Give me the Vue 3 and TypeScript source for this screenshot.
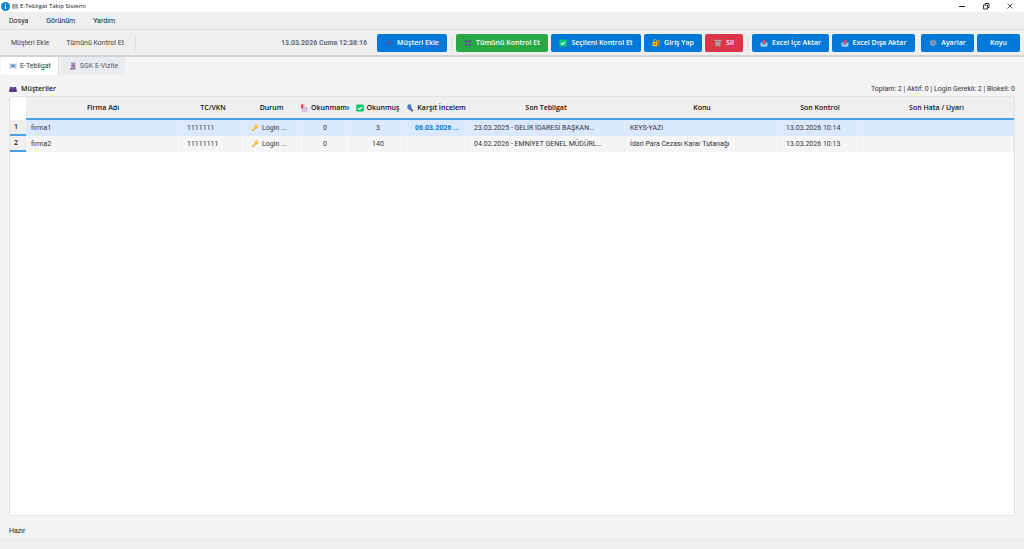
<script setup lang="ts">
import { ref } from 'vue'

interface Customer {
  name: string
  taxId: string
  status: string
  unread: number
  read: number
  review: string
  notice: string
  subject: string
  checked: string
  error: string
}

const customers: Customer[] = [
  { name: 'firma1', taxId: '1111111', status: 'Login ...', unread: 0, read: 3, review: '06.03.2026 ...', notice: '23.03.2025 - GELİR İDARESİ BAŞKAN...', subject: 'KEYS-YAZI', checked: '13.03.2026 10:14', error: '' },
  { name: 'firma2', taxId: '11111111', status: 'Login ...', unread: 0, read: 140, review: '', notice: '04.02.2026 - EMNİYET GENEL MÜDÜRL...', subject: 'İdari Para Cezası Karar Tutanağı', checked: '13.03.2026 10:13', error: '' },
]
const selected = ref(0)
const tab = ref(0)
</script>

<template>
  <div class="window">
    <header class="titlebar">
      <svg class="app-icon" viewBox="0 0 9 9"><circle cx="4.5" cy="4.5" r="4.5" fill="#0a84d8" /><path d="M4.5 1.6v1.2M4.5 3.7v3.6" stroke="#fff" stroke-width="1.1" /></svg>
      <svg class="mail-icon" viewBox="0 0 6 6"><path d="M.4 1.5h5.2v3.7H.4z" fill="#ddd" stroke="#777" stroke-width=".6" /><path d="M.5 1.6 3 3.7l2.5-2.1M.5 5l1.8-1.8M5.5 5 3.7 3.2" fill="none" stroke="#555" stroke-width=".6" /></svg>
      <span class="title">E-Tebligat Takip Sistemi</span>
      <div class="controls">
        <button aria-label="Simge durumuna küçült"><svg viewBox="0 0 8 8"><path d="M1 4.5h6" stroke="#222" /></svg></button>
        <button aria-label="Önceki boyut"><svg viewBox="0 0 8 8"><path d="M1.5 3h4v4h-4zM3 2.5v-1h4v4h-1" fill="none" stroke="#222" stroke-width=".9" /></svg></button>
        <button aria-label="Kapat"><svg viewBox="0 0 8 8"><path d="m1.5 1.5 5 5m0-5-5 5" stroke="#222" stroke-width=".8" /></svg></button>
      </div>
    </header>

    <nav class="menubar">
      <button>Dosya</button>
      <button>Görünüm</button>
      <button>Yardım</button>
    </nav>

    <div class="toolbar">
      <button class="plain">Müşteri Ekle</button>
      <button class="plain">Tümünü Kontrol Et</button>
      <span class="sep"></span>
      <time class="clock">13.03.2026 Cuma 12:38:16</time>
      <button class="act w-add"><svg viewBox="0 0 8 8"><path d="M4 .8v6.4M.8 4h6.4" stroke="#5f5a9c" stroke-width="1.4" /></svg>Müşteri Ekle</button>
      <span class="sep"></span>
      <button class="act green w-all"><svg viewBox="0 0 8 8"><path d="M.3 2.5 2.5.6v1h5v1.6h-5v1.2zM1 5.3h6.5v1.7H1z" fill="#5c5890" /></svg>Tümünü Kontrol Et</button>
      <button class="act w-sel"><svg viewBox="0 0 8 8"><rect x=".3" y=".5" width="7.4" height="7" rx="1" fill="#00cc70" /><path d="m2 4 1.5 1.5L6.2 2.8" fill="none" stroke="#fff" stroke-width="1.1" /></svg>Seçileni Kontrol Et</button>
      <button class="act w-login"><svg viewBox="0 0 8 8"><path d="M1.8 3V1.8a1.3 1.3 0 0 1 2.8 0V3" fill="none" stroke="#d8b46a" stroke-width=".8" /><rect x=".5" y="2.7" width="5" height="4.5" rx=".5" fill="#f6b82c" /><path d="M6.5 1v6M5.7 1.5h1.8v2H5.7" fill="none" stroke="#b98a3c" stroke-width=".9" /><path d="M3 4v1.7" stroke="#563b28" /></svg>Giriş Yap</button>
      <button class="act red w-del"><svg viewBox="0 0 8 8"><path d="M.5.8h7v1.3h-7z" fill="#b5aaa8" /><path d="M1 2.3h6l-.4 5H1.4z" fill="#a08f8c" /><path d="m2 3 4 3.7M6 3 2 6.7" stroke="#cdbfbc" stroke-width=".7" /></svg>Sil</button>
      <span class="sep"></span>
      <button class="act w-in"><svg viewBox="0 0 8 8"><path d="M1 3.8h6v3.4H1z" fill="#6fbfe6" /><path d="M1 3.5v3.7h6V3.5" fill="none" stroke="#d4dce2" stroke-width=".8" /><path d="M4 .3 6.2 3H5.2v2H2.8V3h-1z" fill="#f0446a" /></svg>Excel İçe Aktar</button>
      <button class="act w-out"><svg viewBox="0 0 8 8"><path d="M1 3.8h6v3.4H1z" fill="#6fbfe6" /><path d="M1 3.5v3.7h6V3.5" fill="none" stroke="#d4dce2" stroke-width=".8" /><path d="M4 .3 6.2 3H5.2v2H2.8V3h-1z" fill="#f0446a" /></svg>Excel Dışa Aktar</button>
      <button class="act w-set"><svg viewBox="0 0 8 8"><circle cx="4" cy="4" r="3" fill="none" stroke="#a09aac" stroke-width="1.3" stroke-dasharray="1.35 1" /><circle cx="4" cy="4" r="2" fill="none" stroke="#a59fb0" stroke-width="1.2" /><circle cx="4" cy="4" r=".8" fill="#c2bccb" /></svg>Ayarlar</button>
      <button class="act w-dark">Koyu</button>
    </div>

    <div class="tabs" role="tablist">
      <button role="tab" class="tab" :class="{ on: tab === 0 }" :aria-selected="tab === 0" @click="tab = 0"><svg viewBox="0 0 8 8"><path d="M.4 1.6h7.2v5H.4z" fill="#d6dde6" /><path d="M.6 2 4 4.7 7.4 2M.6 6.3l2.4-2M7.4 6.3l-2.4-2" fill="none" stroke="#8095b0" stroke-width=".6" /><path d="M2.4 2.5h3.2v2.4H2.4z" fill="#3b9be0" /></svg>E-Tebligat</button>
      <button role="tab" class="tab" :class="{ on: tab === 1 }" :aria-selected="tab === 1" @click="tab = 1"><svg viewBox="0 0 8 8"><path d="M2 .5h4.5v6H2z" fill="#b9a5c6" /><path d="M2.8 2h3M2.8 3.4h3M2.8 4.8h3" stroke="#775a8c" stroke-width=".7" /><path d="M1 6.2h5.5v1.3H1z" fill="#8a6f9d" /></svg>SGK E-Vizite</button>
    </div>

    <main class="content">
      <div class="caption">
        <h1><svg viewBox="0 0 8 8"><path d="M.2 7V4.5Q.2 3.8.8 3.8V2.2q.9-1 1.8 0h2.8q.9-1 1.8 0v1.6q.6 0 .6.7V7z" fill="#5b3b83" /><circle cx="4" cy="3.6" r="1" fill="#7c5aa3" /></svg>Müşteriler</h1>
        <p>Toplam: 2 | Aktif: 0 | Login Gerekli: 2 | Blokeli: 0</p>
      </div>

      <div class="table-box">
        <table>
          <colgroup>
            <col class="c-no"><col class="c-wide"><col class="c-mid"><col class="c-small"><col class="c-small"><col class="c-small"><col class="c-mid"><col class="c-wide"><col class="c-wide"><col class="c-date"><col>
          </colgroup>
          <thead>
            <tr>
              <td class="corner"></td>
              <th>Firma Adı</th>
              <th>TC/VKN</th>
              <th>Durum</th>
              <th><svg viewBox="0 0 8 8"><path d="M2 3.5h5V7.5H2z" fill="#ddd3df" stroke="#b9a5bd" stroke-width=".5" /><path d="m2 3.7 2.5 2L7 3.7" fill="none" stroke="#a28ca8" stroke-width=".6" /><path d="M1 .5h2v3.8H1z" fill="#e8345e" /><path d="M3 .6h1.4v1.6H3z" fill="#f36b86" /></svg>Okunmamı</th>
              <th><svg viewBox="0 0 8 8"><rect x=".2" y=".4" width="7.6" height="7.2" rx="1" fill="#00c969" /><path d="m2 4 1.5 1.5L6.2 2.8" fill="none" stroke="#fff" stroke-width="1.1" /></svg>Okunmuş</th>
              <th><svg viewBox="0 0 8 8"><path d="m4.5 4.5 2 2.8" stroke="#5a3c7c" stroke-width="1.7" /><ellipse cx="3.4" cy="3" rx="1.7" ry="2.4" fill="#2e8ee0" stroke="#4a5d8c" stroke-width=".7" /></svg>Karşıt İncelem</th>
              <th>Son Tebligat</th>
              <th>Konu</th>
              <th>Son Kontrol</th>
              <th>Son Hata / Uyarı</th>
            </tr>
          </thead>
          <tbody>
            <tr v-for="(c, i) in customers" :key="c.taxId" :class="{ picked: selected === i }" @click="selected = i">
              <th scope="row">{{ i + 1 }}</th>
              <td>{{ c.name }}</td>
              <td>{{ c.taxId }}</td>
              <td><svg viewBox="0 0 8 8"><path d="M5 3.2 1 7.1" stroke="#f4b22d" stroke-width="1.4" /><path d="m1.6 5.3 1.3 1.3" stroke="#f4b22d" stroke-width=".8" /><circle cx="5.4" cy="2.5" r="2" fill="#fdbb35" /><circle cx="6.1" cy="1.9" r=".5" fill="#fff" /></svg>{{ c.status }}</td>
              <td class="num">{{ c.unread }}</td>
              <td class="num">{{ c.read }}</td>
              <td class="review">{{ c.review }}</td>
              <td>{{ c.notice }}</td>
              <td>{{ c.subject }}</td>
              <td>{{ c.checked }}</td>
              <td>{{ c.error }}</td>
            </tr>
          </tbody>
        </table>
      </div>
      <p class="state">Hazır</p>
    </main>
    <footer class="statusbar"></footer>
  </div>
</template>

<style>
body {
  margin: 0;
}
</style>

<style scoped>
.window {
  display: flex;
  flex-direction: column;
  min-height: 100vh;
  background: #f4f4f4;
  color: #222;
  font: 7px/10px Roboto, "Noto Sans", sans-serif;
}
button {
  margin: 0;
  padding: 0;
  border: 0;
  background: none;
  color: inherit;
  font: inherit;
  white-space: nowrap;
}
svg {
  width: 8px;
  height: 8px;
  flex: none;
}
h1, p {
  margin: 0;
  font-size: 7px;
}
.titlebar {
  display: flex;
  align-items: center;
  height: 12px;
  padding-left: 1px;
  background: #fff;
}
.app-icon {
  width: 9px;
  height: 9px;
}
.mail-icon {
  width: 6px;
  height: 6px;
  margin: 0 2px;
}
.title {
  color: #111;
  font-family: "Open Sans", "Noto Sans", sans-serif;
  font-size: 6px;
}
.controls {
  display: flex;
  gap: 16px;
  margin-left: auto;
  padding-right: 10px;
}
.controls button {
  display: flex;
}
.menubar {
  display: flex;
  gap: 18px;
  height: 17px;
  padding-left: 9px;
  background: #efefef;
  border-bottom: 1px solid #dedede;
}
.toolbar {
  display: flex;
  align-items: center;
  height: 25px;
  padding: 0 4px 0 11px;
  background: #efefef;
  border-bottom: 2px solid #d2d2d2;
}
.plain {
  margin-right: 17px;
  color: #444;
}
.sep {
  width: 1px;
  height: 15px;
  margin: 0 4px;
  background: #dcdcdc;
}
.plain + .sep {
  margin-left: -6px;
}
.clock {
  margin-left: auto;
  margin-right: 10px;
  color: #5f6b7c;
  font-weight: 700;
}
.act {
  display: flex;
  align-items: center;
  justify-content: center;
  gap: 4px;
  height: 18px;
  border-radius: 2px;
  background: #0078d7;
  color: #fff;
}
.act, th, h1 {
  font-family: "Open Sans", "Noto Sans", sans-serif;
  font-weight: 600;
}
.act + .act {
  margin-left: 3px;
}
.green {
  background: #28a745;
}
.red {
  background: #dc3545;
}
.w-add { width: 70px; }
.w-all { width: 92px; }
.w-sel { width: 90px; }
.w-login { width: 58px; }
.w-del { width: 38px; }
.w-in { width: 77px; }
.w-out { width: 83px; }
.w-set { width: 53px; }
.w-dark { width: 43px; }
.act + .w-set {
  margin-left: 6px;
}
.tabs {
  display: flex;
  gap: 2px;
  padding-left: 1px;
}
.tab {
  display: flex;
  align-items: center;
  gap: 3px;
  height: 18px;
  padding: 0 7px 0 8px;
  background: #e8ecef;
  color: #555e68;
}
.tab.on {
  background: #fff;
  border-right: 1px solid #ddd;
  color: #333;
}
.content {
  display: flex;
  flex: 1;
  flex-direction: column;
  padding: 9px 9px 0;
}
.caption {
  display: flex;
  justify-content: space-between;
  align-items: center;
  padding-bottom: 2px;
  color: #333;
}
.caption h1 {
  display: flex;
  align-items: center;
  gap: 4px;
  color: #1a1a1a;
}
.table-box {
  flex: 1;
  border: 1px solid #e3e3e3;
  border-radius: 2px;
  background: #fff;
}
table {
  width: 100%;
  table-layout: fixed;
  border-collapse: separate;
  border-spacing: 0;
}
.c-no { width: 16px; }
.c-wide { width: 156px; }
.c-mid { width: 64px; }
.c-small { width: 53px; }
.c-date { width: 80px; }
td, th {
  box-sizing: border-box;
  padding: 0;
  overflow: hidden;
  white-space: nowrap;
}
thead th {
  height: 23px;
  padding-right: 2px;
  background: #efefef;
  border-bottom: 2px solid #4a9fe3;
  color: #111;
}
th svg, td svg {
  margin-right: 3px;
  vertical-align: middle;
}
tbody td {
  height: 16px;
  padding-left: 5px;
  background: #f5f5f5;
  border-right: 1px solid #eee;
  color: #333;
}
tbody .picked td {
  background: #dbe9ff;
  border-color: #e4ecf8;
}
tbody th {
  padding-right: 4px;
  background: #efefef;
  border-bottom: 2px solid #4a9fe3;
}
tbody .num {
  padding: 0;
  text-align: center;
}
tbody .review {
  padding-left: 10px;
  color: #0078d7;
  font-weight: 700;
}
.state {
  padding: 10px 0 2px;
  color: #222;
}
.statusbar {
  height: 11px;
  background: #efefef;
}
</style>
